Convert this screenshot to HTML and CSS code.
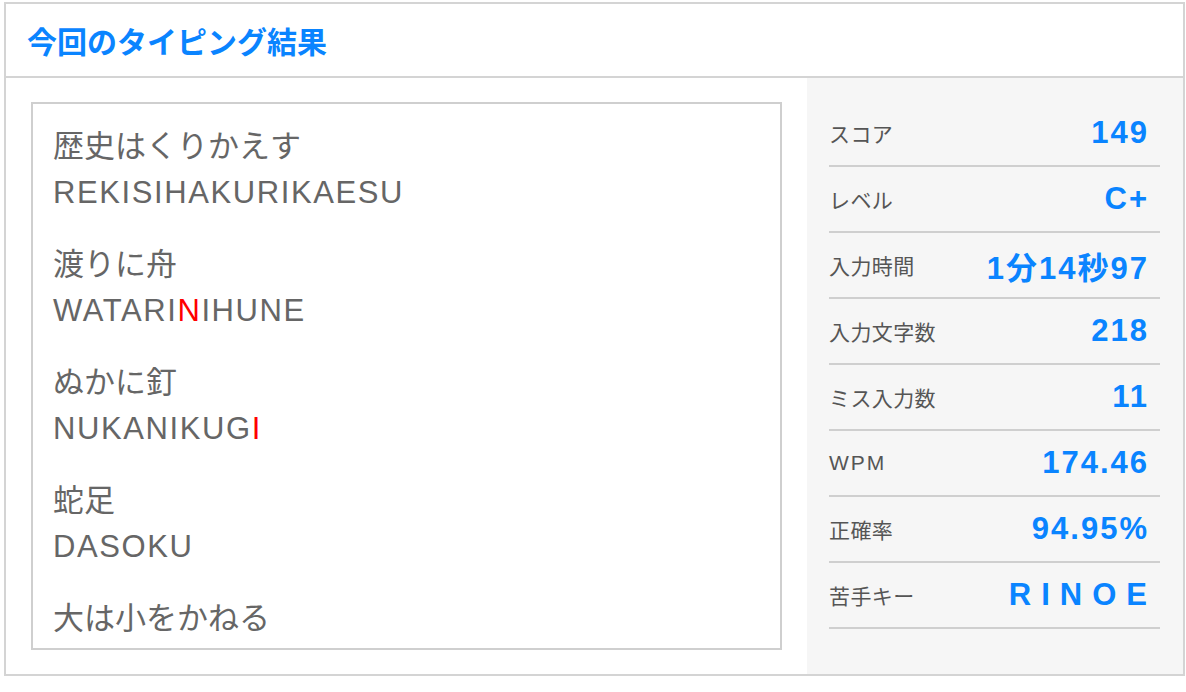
FILE: index.html
```html
<!DOCTYPE html>
<html lang="ja">
<head>
<meta charset="utf-8">
<link rel="stylesheet" href="styles.css">
</head>
<body>
<div class="panel">
  <div class="header"><h1 class="title">今回のタイピング結果</h1></div>
  <div class="body">
    <div class="left">
      <div class="words">
        <div class="item"><div class="line">歴史はくりかえす</div><div class="line roma">REKISIHAKURIKAESU</div></div>
        <div class="item"><div class="line">渡りに舟</div><div class="line roma">WATARI<span class="miss">N</span>IHUNE</div></div>
        <div class="item"><div class="line">ぬかに釘</div><div class="line roma">NUKANIKUG<span class="miss">I</span></div></div>
        <div class="item"><div class="line">蛇足</div><div class="line roma">DASOKU</div></div>
        <div class="item"><div class="line">大は小をかねる</div></div>
      </div>
    </div>
    <div class="right">
      <div class="row"><span class="label">スコア</span><span class="value">149</span></div>
      <div class="row"><span class="label">レベル</span><span class="value">C+</span></div>
      <div class="row"><span class="label">入力時間</span><span class="value">1分14秒97</span></div>
      <div class="row"><span class="label">入力文字数</span><span class="value">218</span></div>
      <div class="row"><span class="label">ミス入力数</span><span class="value">11</span></div>
      <div class="row"><span class="label latin">WPM</span><span class="value">174.46</span></div>
      <div class="row"><span class="label">正確率</span><span class="value">94.95%</span></div>
      <div class="row"><span class="label">苦手キー</span><span class="value keys">RINOE</span></div>
    </div>
  </div>
</div>
</body>
</html>
```
FILE: styles.css
```css
html, body {
  margin: 0;
  padding: 0;
  background: #fff;
}
body {
  font-family: "Liberation Sans", "Noto Sans CJK JP", sans-serif;
  color: #666;
}
.panel {
  margin: 2px 1px 0 4px;
  border: 2px solid #d4d4d4;
  width: 1177px;
  box-sizing: content-box;
}
.header {
  height: 72px;
  border-bottom: 2px solid #d4d4d4;
  display: flex;
  align-items: center;
  padding-left: 21px;
}
.title {
  margin: 0;
  font-size: 30px;
  font-weight: bold;
  color: #0a84ff;
  font-family: "Noto Sans CJK JP", sans-serif;
}
.body {
  display: flex;
  height: 596px;
}
.left {
  width: 751px;
  padding: 24px 25px 0 25px;
}
.words {
  border: 2px solid #cfcfcf;
  padding: 20px 20px 0 20px;
  overflow: hidden;
  box-sizing: border-box;
  height: 548px;
}
.item {
  margin-bottom: 26px;
}
.line {
  font-size: 31px;
  line-height: 46px;
  height: 46px;
  color: #666;
  white-space: nowrap;
}
.roma {
  letter-spacing: 1.6px;
}
.miss {
  color: #ff0000;
}
.right {
  flex: 1;
  background: #f6f6f6;
  padding: 23px 23px 0 22px;
}
.row {
  height: 64px;
  border-bottom: 2px solid #cfcfcf;
  display: flex;
  align-items: center;
  justify-content: space-between;
  padding-right: 13px;
}
.label {
  font-size: 21px;
  letter-spacing: 0.4px;
  color: #555;
}
.label.latin {
  letter-spacing: 2px;
}
.value {
  font-size: 31px;
  font-weight: bold;
  color: #0a84ff;
  letter-spacing: 2px;
  margin-right: -2px;
}
.keys {
  letter-spacing: 10px;
  margin-right: -10px;
}
```
